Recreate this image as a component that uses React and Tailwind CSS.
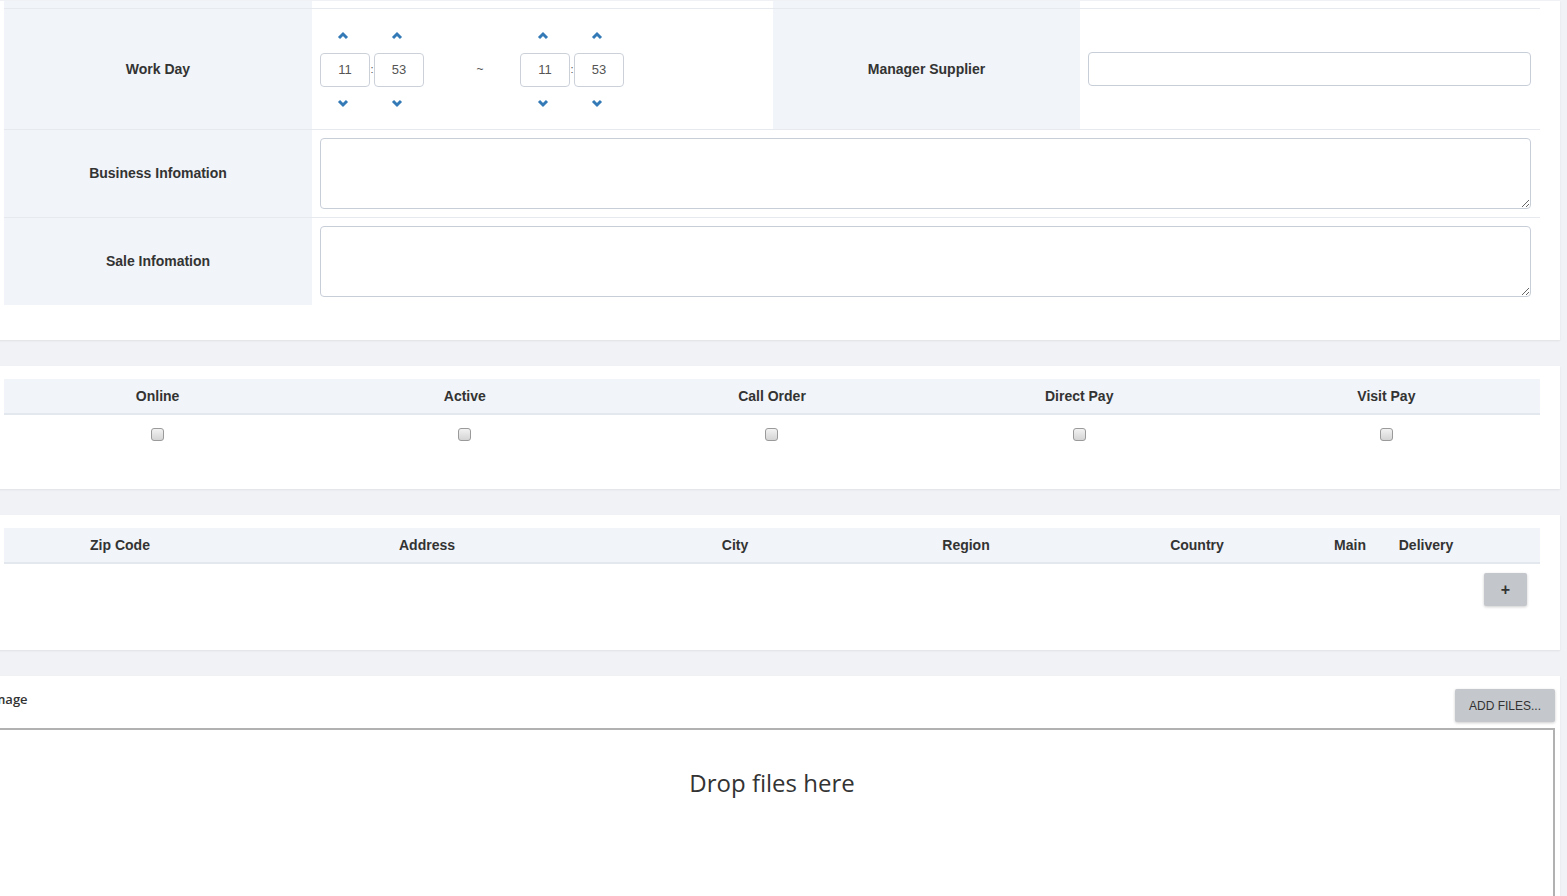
const sans = "font-['Liberation_Sans',Arial,sans-serif]";

function Chevron({ down = false }) {
  return (
    <svg width="12" height="10" viewBox="0 0 12 10" className="-ml-[5px] text-[#337ab7]">
      <polyline
        points={down ? "2,3 6,7 10,3" : "2,7 6,3 10,7"}
        fill="none"
        stroke="currentColor"
        strokeWidth="3"
        strokeLinejoin="miter"
      />
    </svg>
  );
}

function Spinner({ value }) {
  return (
    <div className="flex w-[50px] flex-col items-center">
      <Chevron />
      <input
        readOnly
        value={value}
        className="mt-[12px] mb-[11px] h-[34px] w-[50px] rounded-[4px] border border-[#ccd1d9] text-center text-[13px] text-[#555] outline-none"
      />
      <Chevron down />
    </div>
  );
}

function TimePicker() {
  return (
    <div className="flex items-center">
      <Spinner value="11" />
      <span className="flex w-[4px] justify-center text-[11px] text-[#555]">:</span>
      <Spinner value="53" />
    </div>
  );
}

function Label({ children, className = "" }) {
  return (
    <div
      className={`flex items-center justify-center bg-[#f1f4f8] text-[14px] font-bold text-[#333] ${className}`}
    >
      {children}
    </div>
  );
}

function InfoCard() {
  return (
    <section className="mt-[1px] bg-white px-[20px] pb-[35px] shadow-[0_1px_2px_rgba(0,0,0,0.07)]">
      <div className="grid grid-cols-[308px_461px_307px_1fr]">
        <div className="h-[7px] bg-[#f1f4f8]" />
        <div />
        <div className="h-[7px] bg-[#f1f4f8]" />
        <div />
      </div>
      <div className="grid h-[121px] grid-cols-[308px_461px_307px_1fr] border-t border-[#e6eaef]">
        <Label>Work Day</Label>
        <div className="flex items-center pl-[8px]">
          <TimePicker />
          <div className="w-[96px] pl-[16px] text-center text-[12px] text-[#555]">~</div>
          <TimePicker />
        </div>
        <Label>Manager Supplier</Label>
        <div className="flex items-center pl-[8px] pr-[9px]">
          <input className="h-[34px] w-full rounded-[4px] border border-[#c8ced8] outline-none" />
        </div>
      </div>
      {["Business Infomation", "Sale Infomation"].map((t) => (
        <div
          key={t}
          className="grid grid-cols-[308px_1fr] border-t border-[#e6eaef]"
        >
          <Label>{t}</Label>
          <div className="py-[8px] pl-[8px] pr-[9px]">
            <textarea className="block h-[71px] w-full rounded-[4px] border border-[#c8ced8] outline-none" />
          </div>
        </div>
      ))}
    </section>
  );
}

const flags = ["Online", "Active", "Call Order", "Direct Pay", "Visit Pay"];

function FlagsCard() {
  return (
    <section className="mt-[26px] h-[123px] bg-white px-[20px] pt-[13px] shadow-[0_1px_2px_rgba(0,0,0,0.07)]">
      <div className="grid h-[36px] grid-cols-5 border-b-2 border-[#e3e8ee] bg-[#f1f4f8]">
        {flags.map((f) => (
          <div key={f} className="flex items-center justify-center text-[14px] font-bold text-[#333]">
            {f}
          </div>
        ))}
      </div>
      <div className="grid h-[38px] grid-cols-5">
        {flags.map((f) => (
          <div key={f} className="flex items-center justify-center">
            <input
              type="checkbox"
              className="h-[13px] w-[13px] appearance-none rounded-[3px] border border-[#9a9a9a] bg-gradient-to-b from-[#f2f2f2] to-[#d4d4d4]"
            />
          </div>
        ))}
      </div>
    </section>
  );
}

const addrCols = [
  ["Zip Code", "w-[232px]"],
  ["Address", "w-[382px]"],
  ["City", "w-[234px]"],
  ["Region", "w-[228px]"],
  ["Country", "w-[234px]"],
  ["Main", "w-[72px]"],
  ["Delivery", "w-[80px]"],
];

function AddressCard() {
  return (
    <section className="mt-[26px] h-[135px] bg-white px-[20px] pt-[13px] shadow-[0_1px_2px_rgba(0,0,0,0.07)]">
      <div className="flex h-[36px] border-b-2 border-[#e3e8ee] bg-[#f1f4f8]">
        {addrCols.map(([c, w]) => (
          <div key={c} className={`flex items-center justify-center text-[14px] font-bold text-[#333] ${w}`}>
            {c}
          </div>
        ))}
      </div>
      <div className="flex justify-end pr-[13px] pt-[9px]">
        <button className="flex h-[33px] w-[43px] items-center justify-center rounded-[2px] bg-[#c3c7cb] text-[16px] font-bold text-[#333] shadow-[0_1px_3px_rgba(0,0,0,0.2)]">
          +
        </button>
      </div>
    </section>
  );
}

function UploadCard() {
  return (
    <section className="mt-[26px] bg-white px-[5px] pt-[13px] shadow-[0_1px_2px_rgba(0,0,0,0.07)]">
      <div className="flex items-start justify-between">
        <div className="pt-[1px] font-['Open_Sans',sans-serif] text-[13px] font-semibold text-[#333]">
          Image
        </div>
        <button className="h-[33px] w-[100px] rounded-[2px] bg-[#c4c8cc] text-[12px] text-[#333] shadow-[0_1px_3px_rgba(0,0,0,0.2)]">
          ADD FILES...
        </button>
      </div>
      <div className="mt-[6px] flex h-[220px] justify-center border-2 border-[#b1b1b1] pt-[35px]">
        <span className="font-['Open_Sans',sans-serif] text-[24px] text-[#333]">Drop files here</span>
      </div>
    </section>
  );
}

export default function App() {
  return (
    <div className={`h-[896px] overflow-hidden bg-[#f0f2f5] ${sans}`}>
      <div className="ml-[-16px] mr-[7px]">
        <InfoCard />
        <FlagsCard />
        <AddressCard />
        <UploadCard />
      </div>
    </div>
  );
}
